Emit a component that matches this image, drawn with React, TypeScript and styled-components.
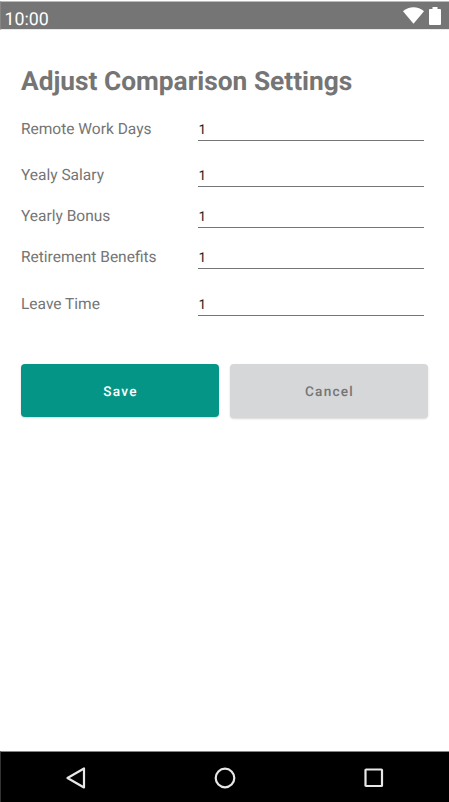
import React from "react";
import styled, { createGlobalStyle } from "styled-components";

const GlobalStyle = createGlobalStyle`
  *, *::before, *::after { box-sizing: border-box; }
  body { margin: 0; background: #fff; }
`;

const Screen = styled.div`
  display: flex;
  flex-direction: column;
  width: 449px;
  height: 802px;
  overflow: hidden;
  background: #fff;
  color: #757575;
  font-family: Roboto, "Liberation Sans", sans-serif;
  text-rendering: geometricPrecision;
`;

const StatusBar = styled.header`
  display: flex;
  justify-content: space-between;
  height: 29px;
  margin-top: 1px;
  flex: none;
  padding: 0 8px 0 4px;
  background: #757575;
  border-top: 1px solid #b9bbbc;
  border-bottom: 1px solid #e9e9e9;
  border-left: 1px solid #868686;
  color: #fff;
`;

const Clock = styled.time`
  font-size: 17.8px;
  line-height: 20px;
  padding-top: 8px;
  margin-left: -0.5px;
`;

const StatusIcons = styled.div`
  display: flex;
  gap: 4px;
  padding-top: 5px;
`;

const Content = styled.main`
  flex: 1;
  padding: 35px 21px 0;
`;

const Title = styled.h1`
  margin: 0;
  font-size: 26.3px;
  font-weight: 700;
  line-height: 34px;
  white-space: nowrap;
`;

const Form = styled.form`
  padding-top: 12px;
`;

const Row = styled.div<{ $gap: number }>`
  display: grid;
  grid-template-columns: 177px 226px;
  height: 30px;
  margin-top: ${({ $gap }) => $gap}px;
`;

const Label = styled.label`
  font-size: 15.5px;
  line-height: 20px;
  padding-top: 8px;
  white-space: nowrap;
`;

const Field = styled.input`
  width: 100%;
  height: 30px;
  margin: 0;
  padding: 8px 0 0 0.5px;
  border: 0;
  border-bottom: 1px solid #757575;
  border-radius: 0;
  outline: 0;
  background: transparent;
  color: #212121;
  font: 400 13.5px/20px Roboto, "Liberation Sans", sans-serif;
  text-rendering: geometricPrecision;
`;

const Actions = styled.div`
  display: grid;
  grid-template-columns: 198px 198px;
  column-gap: 11px;
  margin-top: 48px;
`;

const Button = styled.button<{ $primary?: boolean }>`
  height: ${({ $primary }) => ($primary ? 53 : 54)}px;
  padding: ${({ $primary }) => ($primary ? 2 : 1)}px 0 0 1px;
  border: 0;
  border-radius: 4px;
  background: ${({ $primary }) => ($primary ? "#049587" : "#d6d7d9")};
  color: ${({ $primary }) => ($primary ? "#fff" : "#757575")};
  box-shadow: 0 1px 2px rgba(0, 0, 0, 0.16);
  font: 500 13.600px/20px Roboto, "Liberation Sans", sans-serif;
  letter-spacing: 1.25px;
  text-rendering: geometricPrecision;
`;

const NavBar = styled.nav`
  display: grid;
  grid-template-columns: repeat(3, 149px);
  justify-content: center;
  align-items: center;
  justify-items: center;
  flex: none;
  height: 51px;
  padding-top: 2px;
  border-top: 1px solid #858585;
  border-left: 1px solid #333;
  background: #000;
`;

const NavIcon = styled.svg`
  display: block;
  fill: none;
  stroke: #e8e8e8;
  stroke-width: 2.2;
  stroke-linejoin: round;
`;

const settings = [
  { id: "remote", label: "Remote Work Days", gap: 0 },
  { id: "salary", label: "Yealy Salary", gap: 16 },
  { id: "bonus", label: "Yearly Bonus", gap: 11 },
  { id: "retirement", label: "Retirement Benefits", gap: 11 },
  { id: "leave", label: "Leave Time", gap: 17 },
];

export default function App() {
  return (
    <Screen>
      <GlobalStyle />
      <StatusBar>
        <Clock>10:00</Clock>
        <StatusIcons>
          <svg width="22" height="18" viewBox="0 0 22 18" fill="#fff">
            <path d="M0 4.2C6-1 15-1 21 4.2L10.500 16.8Z" />
          </svg>
          <svg width="12" height="18" viewBox="0 0 12 18" fill="#fff">
            <path d="M3.5 0h5v2H11q1 0 1 1v14q0 1-1 1H1q-1 0-1-1V3q0-1 1-1h2.500Z" />
          </svg>
        </StatusIcons>
      </StatusBar>
      <Content>
        <Title>Adjust Comparison Settings</Title>
        <Form onSubmit={(e) => e.preventDefault()}>
          {settings.map(({ id, label, gap }) => (
            <Row key={id} $gap={gap}>
              <Label htmlFor={id}>{label}</Label>
              <Field id={id} defaultValue="1" />
            </Row>
          ))}
          <Actions>
            <Button $primary type="submit">Save</Button>
            <Button type="button">Cancel</Button>
          </Actions>
        </Form>
      </Content>
      <NavBar>
        <NavIcon width="22" height="22" viewBox="0 0 22 22">
          <path d="M19 1.500V20.500L2.500 11Z" />
        </NavIcon>
        <NavIcon width="22" height="22" viewBox="0 0 22 22">
          <circle cx="11" cy="11" r="9.300" />
        </NavIcon>
        <NavIcon width="22" height="22" viewBox="0 0 22 22">
          <rect x="2.500" y="2.500" width="16.500" height="16.500" rx="0.600" />
        </NavIcon>
      </NavBar>
    </Screen>
  );
}
